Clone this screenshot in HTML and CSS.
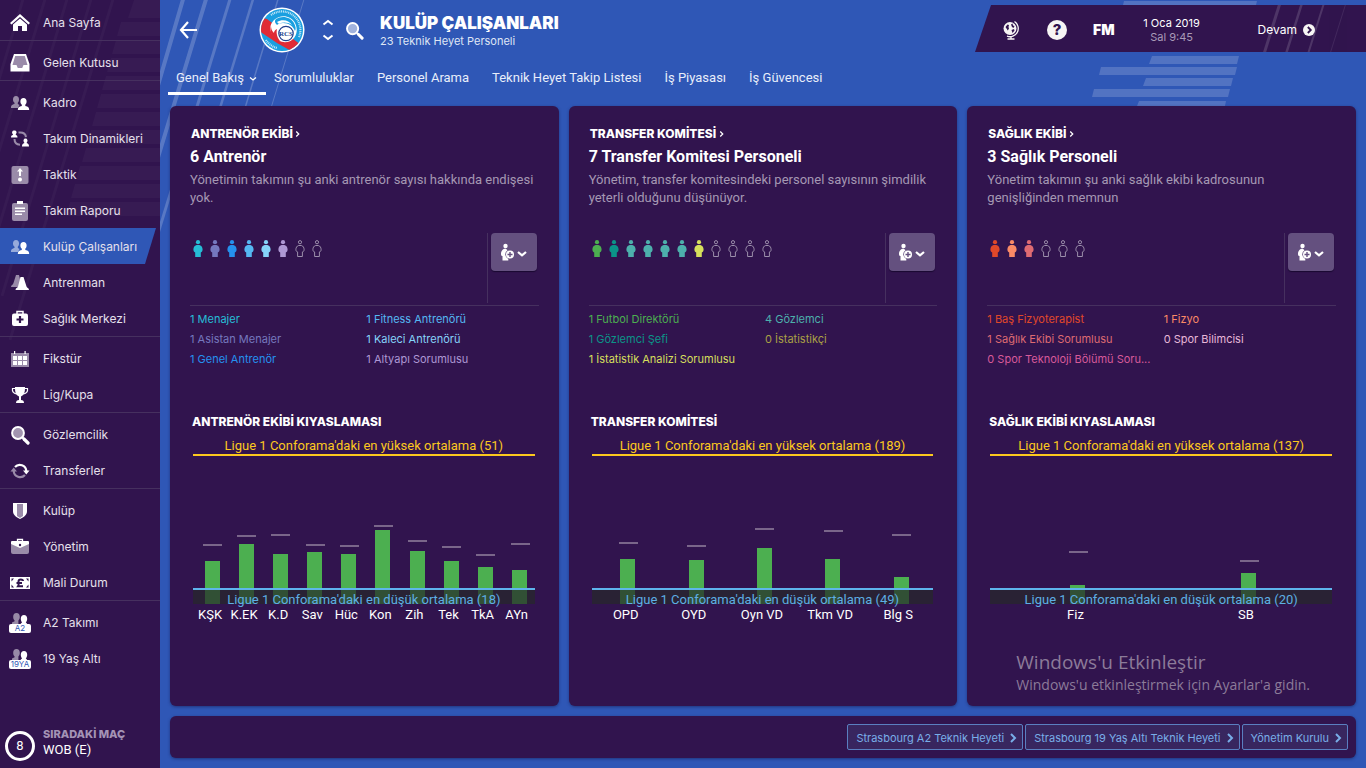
FILE: index.html
```html
<!DOCTYPE html>
<html lang="tr">
<head>
<meta charset="utf-8">
<meta name="viewport" content="width=device-width, initial-scale=1">
<title>Kulüp Çalışanları</title>
<link rel="stylesheet" href="styles.css">
</head>
<body>
<svg class="defs" aria-hidden="true">
  <symbol id="person" viewBox="0 0 10 17"><circle cx="5" cy="2.200" r="2.100"/><path d="M3.600 5h2.800C8.800 5.400 9.600 7.800 9.600 9.600c0 1.600-.7 2.600-1.800 2.800V17H2.200v-4.600C1.100 12.200.4 11.200.4 9.600.4 7.800 1.200 5.400 3.600 5z"/></symbol>
  <symbol id="person-open" viewBox="0 0 10 17"><g fill="none" stroke="#9c8fab" stroke-width="1"><circle cx="5" cy="2.200" r="1.600"/><path d="M3.700 5.500h2.600C8.300 5.900 9.100 7.900 9.100 9.600c0 1.200-.5 2.200-1.700 2.300v4.600H2.600v-4.600C1.400 11.800.9 10.800.9 9.600c0-1.700.8-3.700 2.800-4.100z"/></g></symbol>
  <symbol id="pair" viewBox="0 0 20 20"><path opacity=".5" d="M6 3c2 0 3 1.500 3 3.500 0 1.500-.5 2.500-1.200 3.200v1.300l1.700 1-1.500 3H1c0-2.500.5-3 3.500-4V9.700C3.500 9 3 8 3 6.500 3 4.500 4 3 6 3z"/><path d="M13.500 5c2 0 3.100 1.500 3.100 3.500 0 1.500-.6 2.500-1.300 3.200V13c3 .8 3.900 1.500 3.900 4H7.800c0-2.500 1-3.200 4-4v-1.300c-.8-.7-1.400-1.700-1.400-3.200 0-2 1.100-3.500 3.100-3.500z"/></symbol>
  <symbol id="pair-top" viewBox="0 0 20 20"><path opacity=".5" d="M6.500 0c2.200 0 3.300 1.500 3.300 3.800 0 1.700-.6 2.900-1.400 3.700V12H2V9.500l2.600-1.200v-.8C3.700 6.700 3.200 5.500 3.200 3.800 3.200 1.500 4.300 0 6.500 0z"/><path d="M14 2c2 0 3.200 1.500 3.200 3.700 0 1.600-.6 2.800-1.400 3.500L18 12H9.500l2.600-2.800c-.8-.7-1.300-1.900-1.300-3.500C10.800 3.500 12 2 14 2z"/></symbol>
  <symbol id="chev" viewBox="0 0 8 10"><path d="M2 1l4 4-4 4" fill="none" stroke="currentColor" stroke-width="2"/></symbol>
  <symbol id="addstaff" viewBox="0 0 28 18"><circle cx="5.500" cy="3" r="2.200"/><path d="M5 5.800C2.500 5.800 1 8.500 1 11c0 1.500.5 2 1.500 2v4.500h5.800V16a5 5 0 0 1-.8-8.800C7 6.500 6 5.800 5 5.800z"/><circle cx="10" cy="11.500" r="4"/><path d="M10 9v5M7.500 11.500h5" stroke="#64507f" stroke-width="1.400"/><path d="M18 9l4 3.400L26 9" fill="none" stroke="#fff" stroke-width="2.200"/></symbol>
  <symbol id="lens" viewBox="0 0 20 20"><circle cx="8" cy="8" r="5.900" fill="#fff" fill-opacity=".55" stroke="#fff" stroke-width="2"/><path d="M12.500 12.500l1.500 1.500" stroke="#fff" stroke-width="2"/><path d="M14 14l4 4" stroke="#fff" stroke-width="3.200" stroke-linecap="round"/></symbol>
</svg>

<nav class="side" aria-label="Ana menü">
  <svg class="side-art" viewBox="0 0 160 480" aria-hidden="true">
    <g stroke="#fff" stroke-opacity=".03" stroke-width="3"><path d="M24-4L-40 210M46-4L-40 280M68-4L-20 290M92-4L2 296M114-4L10 340"/></g>
    <g fill="#fff" fill-opacity=".03"><path d="M134 0h26v18h-32zM121 22h39v14h-43zM116 40h44v14h-48zM111 58h49v14h-53zM106 76h54v14h-58zM101 94h59v14h-63zM96 112h64v14H92zM91 130h69v14H87zM86 148h74v14H82zM80 166h80v14H76zM75 184h85v14H71zM70 202h90v14H66z"/></g>
  </svg>
  <ul class="menu">
    <li><a href="#"><svg viewBox="0 0 20 20"><path d="M10 1l10 9-1.500 1.500L10 4l-8.500 7.500L0 10z"/><path d="M10 5.500l7 6V18h-5v-5H8v5H3v-6.500z"/></svg>Ana Sayfa</a></li>
    <li class="sep"><a href="#"><svg viewBox="0 0 20 20"><path d="M4 1h12l3.500 10v7.500H.5V11z"/><path fill="#9a8ba9" d="M5.200 3h9.600l2.700 9h-4l-1.300 3H7.800l-1.300-3h-4z"/></svg>Gelen Kutusu</a></li>
    <li class="sep"><a href="#"><svg viewBox="0 0 20 20"><use href="#pair"/></svg>Kadro</a></li>
    <li><a href="#"><svg viewBox="0 0 20 20"><path d="M4.500 1.500a2 2 0 0 1 1.300 3.600v1c1.200.3 1.700.9 1.700 2.400H1c0-1.500.5-2.100 1.900-2.400v-1A2 2 0 0 1 4.500 1.500zM15.500 9.500a2.100 2.100 0 0 1 1.300 3.700v1.100c1.500.4 2.200 1 2.200 3.200h-7c0-2.200.8-2.800 2.200-3.200v-1.100a2.100 2.100 0 0 1 1.300-3.700z"/><path d="M8.500 3.500c4-.5 7 1 7.500 4.500M4.500 10c0 3.500 2 5.500 5.500 5.800" fill="none" stroke="#9a8ba9" stroke-width="2"/></svg>Takım Dinamikleri</a></li>
    <li><a href="#"><svg viewBox="0 0 20 20"><rect x="1.500" y="1" width="17" height="18" rx="2" fill="#9a8ba9"/><path d="M10 3l3 3.500h-2V11H9V6.500H7z"/><circle cx="10" cy="14.500" r="2"/></svg>Taktik</a></li>
    <li><a href="#"><svg viewBox="0 0 20 20"><rect x="2" y="2" width="16" height="18" rx="2" fill="#9a8ba9"/><path d="M7 0h6v3H7zM5 6.500h10V8H5zM5 9.500h10V11H5zM5 12.500h7V14H5z"/></svg>Takım Raporu</a></li>
    <li><a class="on" href="#" aria-current="page"><svg viewBox="0 0 20 20"><use href="#pair"/></svg>Kulüp Çalışanları</a></li>
    <li><a href="#"><svg viewBox="0 0 20 20"><path fill="#9a8ba9" d="M6 2h3l2 8-3 4H1c0-2 2-2 2.500-4z"/><path d="M10.500 4h3l3 9.500c.5 1.500 2.500 1.500 2.500 3.500H5.500c0-2 2-2 2.500-3.500z"/></svg>Antrenman</a></li>
    <li><a href="#"><svg viewBox="0 0 20 20"><path d="M7 5V2.500h6V5" fill="none" stroke="#fff" stroke-width="1.500"/><rect x="2" y="4.500" width="16" height="12.500" rx="2"/><path d="M10 7v7M6.500 10.500h7" stroke="#31144e" stroke-width="2.200"/></svg>Sağlık Merkezi</a></li>
    <li class="sep"><a href="#"><svg viewBox="0 0 20 20"><path fill="#9a8ba9" d="M1 4h18v14H1z"/><path d="M4 2h1.200v3H4zM14.500 2h1.200v3h-1.200zM3 7h4v4H3zM8 7h4v4H8zM13 7h4v4h-4zM3 12h4v4H3zM8 12h4v4H8zM13 12h4v4h-4z"/></svg>Fikstür</a></li>
    <li><a href="#"><svg viewBox="0 0 20 20"><path d="M5 2h10c0 5-.5 8-4 9.500V15c2 .3 3 1 3 3H6c0-2 1-2.700 3-3v-3.500C5.500 10 5 7 5 2z"/><path d="M5.500 3.500h-3C2 6.500 3.500 8.500 6.500 9M14.500 3.500h3c.5 3-1 5-4 5.500" fill="none" stroke="#fff" stroke-width="1.200"/></svg>Lig/Kupa</a></li>
    <li class="sep"><a href="#"><svg viewBox="0 0 20 20"><use href="#lens"/></svg>Gözlemcilik</a></li>
    <li><a href="#"><svg viewBox="0 0 20 20"><path d="M5 6a6.500 6.500 0 0 1 11.300 4" fill="none" stroke="#fff" stroke-width="2.200"/><path d="M13 9.500h6.500l-3.200 4z"/><path d="M15 14A6.500 6.500 0 0 1 3.700 10" fill="none" stroke="#9a8ba9" stroke-width="2.200"/><path fill="#9a8ba9" d="M.5 10.500H7L3.700 6.500z"/></svg>Transferler</a></li>
    <li class="sep"><a href="#"><svg viewBox="0 0 20 20"><path d="M3 2h14v8c0 4-3 6-7 8-4-2-7-4-7-8z"/><path fill="#9a8ba9" d="M7 3h6v12l-3 2-3-2z"/></svg>Kulüp</a></li>
    <li><a href="#"><svg viewBox="0 0 20 20"><path fill="#9a8ba9" d="M1 6h18v9a2 2 0 0 1-2 2H3a2 2 0 0 1-2-2z"/><path d="M1 5a1 1 0 0 1 1-1h16a1 1 0 0 1 1 1v2l-9 4-9-4z"/><path d="M7.500 4V2.500h5V4" fill="none" stroke="#fff" stroke-width="1.300"/><circle cx="10" cy="8" r="1.200" fill="#31144e"/></svg>Yönetim</a></li>
    <li><a href="#"><svg viewBox="0 0 20 20"><path d="M0 4h20v12H0z"/><path fill="#31144e" d="M1.500 5.500H4l-2.500 3zM18.500 5.500H16l2.500 3zM1.500 14.500H4l-2.500-3zM18.500 14.500H16l2.500-3z"/><path d="M13 8c0-2-4.500-2.500-4.500.5 0 2 .7 3-.5 4.800h5M6.500 10H12" fill="none" stroke="#31144e" stroke-width="2"/></svg>Mali Durum</a></li>
    <li class="sep"><a href="#"><span class="squad"><svg viewBox="0 0 20 20"><use href="#pair-top"/></svg><b>A2</b></span>A2 Takımı</a></li>
    <li><a href="#"><span class="squad"><svg viewBox="0 0 20 20"><use href="#pair-top"/></svg><b>19YA</b></span>19 Yaş Altı</a></li>
  </ul>
  <a class="next" href="#"><span class="ring">8</span><span class="match"><b>SIRADAKİ MAÇ</b><span class="opp">WOB (E)</span></span></a>
</nav>

<main class="main">
  <svg class="main-art" width="1206" height="240" aria-hidden="true">
    <g stroke="#fff" stroke-opacity=".2"><path stroke-width="4" d="M24-4L-8 106M47-4L-27 240"/><path stroke-width="3" d="M71-4L-4 240"/><path stroke-width="2.500" d="M94-4L20 240"/><path stroke-width="1.500" d="M119-4L45 240"/><path stroke-width="1" d="M145-4L71 240"/></g>
  </svg>
  <svg class="bar-art" width="170" height="106" aria-hidden="true"><g fill="#fff" fill-opacity=".17"><path d="M32 1h133l-1 4H31zM60 56h87l-2 8H57zM9 67h136l-2 8H7zM54 78h87l-2 8H51zM2 89h136l-2 8H0zM47 101h87l-1 5H45z"/></g></svg>
  <header class="top">
    <button class="plain back" aria-label="Geri"><svg width="18" height="20" viewBox="0 0 18 20"><path d="M9 2L2 10l7 8M2 10h16" fill="none" stroke="#fff" stroke-width="2.200"/></svg></button>
    <svg class="crest" width="46" height="46" viewBox="0 0 46 46" role="img" aria-label="Strasbourg">
      <defs><clipPath id="disc"><circle cx="23" cy="23" r="21"/></clipPath></defs>
      <circle cx="23" cy="23" r="22.500" fill="#fff"/>
      <g clip-path="url(#disc)"><path fill="#1a9fe0" d="M0 0h46v46H0z"/><path fill="#e02b35" d="M0 10l8 2 34 26-8 7-16-9L0 24z"/></g>
      <g fill="none" stroke="#fff" stroke-width="2.200" stroke-opacity=".75" stroke-dasharray="1 .8"><path d="M12 8A18.500 18.500 0 0 1 40 30"/><path d="M7 33A18.500 18.500 0 0 0 18 41"/></g>
      <path fill="#fff" d="M15 13c6-6 17-5 21 3 3 6 2 12-2 16-5 5-14 4-19-2-5-6-5-12 0-17z"/>
      <path fill="#1a9fe0" d="M17 12c6-4 15-2 18 4 2 4 2 6 1 8-2-5-6-8-12-8-3 0-5 1-6 2-2-2-3-4-1-6z"/>
      <path fill="#fff" d="M18 15c5-3 12-2 15 3-5-3-9-3-13-1z"/>
      <path fill="#e02b35" d="M12 19c-2 7 2 14 10 16-4-4-5-9-4-13-2 1-3 2-3 4-2-2-3-4-3-7z"/>
      <circle cx="27" cy="26.500" r="7.200" fill="#fff" stroke="#203f8c" stroke-width="1.200"/>
      <text x="27" y="29" text-anchor="middle" font-size="7" font-weight="700" fill="#203f8c">RCS</text>
    </svg>
    <div class="steps">
      <button class="plain" aria-label="Önceki"><svg width="12" height="7" viewBox="0 0 12 7"><path d="M1.500 5.500L6 2l4.500 3.500" fill="none" stroke="#fff" stroke-width="2"/></svg></button>
      <button class="plain" aria-label="Sonraki"><svg width="12" height="7" viewBox="0 0 12 7"><path d="M1.500 1.500L6 5l4.500-3.500" fill="none" stroke="#fff" stroke-width="2"/></svg></button>
    </div>
    <button class="plain find" aria-label="Ara"><svg width="19" height="19"><use href="#lens"/></svg></button>
    <div class="heading"><h1>KULÜP ÇALIŞANLARI</h1><p>23 Teknik Heyet Personeli</p></div>
    <div class="status">
      <svg class="status-art" width="90" height="47" aria-hidden="true"><g stroke="#fff" stroke-opacity=".14"><path stroke-width="3" d="M20-2L4 49"/><path stroke-width="2.500" d="M42-2L26 49"/><path stroke-width="2" d="M64-2L48 49"/><path stroke-width="1" opacity=".6" d="M86-2L70 49"/></g></svg>
      <button class="plain globe" aria-label="Dünya"><svg width="18" height="20" viewBox="0 0 18 20"><circle cx="8" cy="8.500" r="6.500" fill="#f7f5f4"/><path fill="#31144e" d="M3.500 7l2-2.500 1.500.5-.5 2 .5 1.500-1.200 2zM9 4.500l1.500-1 .5 2 1.500.5-1 2-1.500-1zM9.500 10l2.500-1 .5 1.500-2 2.500z"/><path d="M12.500 1.500A8.300 8.300 0 0 1 5 16.200M9 16.500v2M5.500 19h7" fill="none" stroke="#f7f5f4" stroke-width="1.300"/></svg></button>
      <button class="plain help" aria-label="Yardım">?</button>
      <button class="plain fm">FM</button>
      <div class="date"><span>1 Oca 2019</span><small>Sal 9:45</small></div>
      <button class="plain go">Devam <svg width="12" height="12" viewBox="0 0 12 12"><circle cx="6" cy="6" r="6" fill="#f7f5f4"/><path d="M4.800 3l3 3-3 3" fill="none" stroke="#31144e" stroke-width="1.800"/></svg></button>
    </div>
  </header>
  <nav class="tabs" aria-label="Sekmeler">
    <a class="on" href="#">Genel Bakış<svg width="8" height="6" viewBox="0 0 8 6"><path d="M1 1.500l3 2.500 3-2.500" fill="none" stroke="#fff" stroke-width="1.300"/></svg></a>
    <a href="#">Sorumluluklar</a><a href="#">Personel Arama</a><a href="#">Teknik Heyet Takip Listesi</a><a href="#">İş Piyasası</a><a href="#">İş Güvencesi</a>
  </nav>

  <div class="cards">
    <section class="card">
      <h2><a href="#">ANTRENÖR EKİBİ <svg width="5" height="8"><use href="#chev"/></svg></a></h2>
      <h3>6 Antrenör</h3>
      <p class="desc">Yönetimin takımın şu anki antrenör sayısı hakkında endişesi yok.</p>
      <div class="staff">
        <div class="people">
          <svg class="c-teal"><use href="#person"/></svg><svg class="c-indigo"><use href="#person"/></svg><svg class="c-blue"><use href="#person"/></svg><svg class="c-sky"><use href="#person"/></svg><svg class="c-pale"><use href="#person"/></svg><svg class="c-lilac"><use href="#person"/></svg><svg><use href="#person-open"/></svg><svg><use href="#person-open"/></svg>
        </div>
        <div class="act"><button class="add" aria-label="Personel ekle"><svg width="28" height="18"><use href="#addstaff"/></svg></button></div>
      </div>
      <div class="roles"><a class="c-teal" href="#">1 Menajer</a><a class="c-sky" href="#">1 Fitness Antrenörü</a><a class="c-indigo" href="#">1 Asistan Menajer</a><a class="c-pale" href="#">1 Kaleci Antrenörü</a><a class="c-blue" href="#">1 Genel Antrenör</a><a class="c-lilac" href="#">1 Altyapı Sorumlusu</a></div>
      <h2 class="cmp">ANTRENÖR EKİBİ KIYASLAMASI</h2>
      <div class="chart">
        <p class="high">Ligue 1 Conforama'daki en yüksek ortalama (51)</p>
        <div class="plot">
          <div style="--v:43px;--m:58px"></div><div style="--v:60px;--m:67px"></div><div style="--v:50px;--m:68px"></div><div style="--v:52px;--m:58px"></div><div style="--v:50px;--m:57px"></div><div style="--v:74px;--m:77px"></div><div style="--v:53px;--m:62px"></div><div style="--v:43px;--m:56px"></div><div style="--v:37px;--m:48px"></div><div style="--v:34px;--m:59px"></div>
          <p class="low">Ligue 1 Conforama'daki en düşük ortalama (18)</p>
        </div>
        <div class="axis"><span>KŞK</span><span>K.EK</span><span>K.D</span><span>Sav</span><span>Hüc</span><span>Kon</span><span>Zih</span><span>Tek</span><span>TkA</span><span>AYn</span></div>
      </div>
    </section>

    <section class="card">
      <h2><a href="#">TRANSFER KOMİTESİ <svg width="5" height="8"><use href="#chev"/></svg></a></h2>
      <h3>7 Transfer Komitesi Personeli</h3>
      <p class="desc">Yönetim, transfer komitesindeki personel sayısının şimdilik yeterli olduğunu düşünüyor.</p>
      <div class="staff">
        <div class="people">
          <svg class="c-green"><use href="#person"/></svg><svg class="c-deep"><use href="#person"/></svg><svg class="c-sea"><use href="#person"/></svg><svg class="c-sea"><use href="#person"/></svg><svg class="c-sea"><use href="#person"/></svg><svg class="c-sea"><use href="#person"/></svg><svg class="c-lime"><use href="#person"/></svg><svg><use href="#person-open"/></svg><svg><use href="#person-open"/></svg><svg><use href="#person-open"/></svg><svg><use href="#person-open"/></svg>
        </div>
        <div class="act"><button class="add" aria-label="Personel ekle"><svg width="28" height="18"><use href="#addstaff"/></svg></button></div>
      </div>
      <div class="roles"><a class="c-green" href="#">1 Futbol Direktörü</a><a class="c-sea" href="#">4 Gözlemci</a><a class="c-deep" href="#">1 Gözlemci Şefi</a><a class="c-olive" href="#">0 İstatistikçi</a><a class="c-lime" href="#">1 İstatistik Analizi Sorumlusu</a></div>
      <h2 class="cmp">TRANSFER KOMİTESİ</h2>
      <div class="chart">
        <p class="high">Ligue 1 Conforama'daki en yüksek ortalama (189)</p>
        <div class="plot">
          <div style="--v:45px;--m:60px"></div><div style="--v:44px;--m:57px"></div><div style="--v:56px;--m:74px"></div><div style="--v:45px;--m:72px"></div><div style="--v:27px;--m:68px"></div>
          <p class="low">Ligue 1 Conforama'daki en düşük ortalama (49)</p>
        </div>
        <div class="axis"><span>OPD</span><span>OYD</span><span>Oyn VD</span><span>Tkm VD</span><span>Blg S</span></div>
      </div>
    </section>

    <section class="card">
      <h2><a href="#">SAĞLIK EKİBİ <svg width="5" height="8"><use href="#chev"/></svg></a></h2>
      <h3>3 Sağlık Personeli</h3>
      <p class="desc">Yönetim takımın şu anki sağlık ekibi kadrosunun genişliğinden memnun</p>
      <div class="staff">
        <div class="people">
          <svg class="c-red"><use href="#person"/></svg><svg class="c-orange"><use href="#person"/></svg><svg class="c-rose"><use href="#person"/></svg><svg><use href="#person-open"/></svg><svg><use href="#person-open"/></svg><svg><use href="#person-open"/></svg>
        </div>
        <div class="act"><button class="add" aria-label="Personel ekle"><svg width="28" height="18"><use href="#addstaff"/></svg></button></div>
      </div>
      <div class="roles"><a class="c-red" href="#">1 Baş Fizyoterapist</a><a class="c-orange" href="#">1 Fizyo</a><a class="c-rose" href="#">1 Sağlık Ekibi Sorumlusu</a><a class="c-pink" href="#">0 Spor Bilimcisi</a><a class="c-magenta" href="#">0 Spor Teknoloji Bölümü Soru...</a></div>
      <h2 class="cmp">SAĞLIK EKİBİ KIYASLAMASI</h2>
      <div class="chart">
        <p class="high">Ligue 1 Conforama'daki en yüksek ortalama (137)</p>
        <div class="plot">
          <div style="--v:19px;--m:51px"></div><div style="--v:31px;--m:42px"></div>
          <p class="low">Ligue 1 Conforama'daki en düşük ortalama (20)</p>
        </div>
        <div class="axis"><span>Fiz</span><span>SB</span></div>
      </div>
    </section>
  </div>

  <footer class="links">
    <a href="#">Strasbourg A2 Teknik Heyeti <svg width="8" height="10"><use href="#chev"/></svg></a>
    <a href="#">Strasbourg 19 Yaş Altı Teknik Heyeti <svg width="8" height="10"><use href="#chev"/></svg></a>
    <a href="#">Yönetim Kurulu <svg width="8" height="10"><use href="#chev"/></svg></a>
  </footer>
</main>
<div class="activate"><strong>Windows'u Etkinleştir</strong><span>Windows'u etkinleştirmek için Ayarlar'a gidin.</span></div>
</body>
</html>
```
FILE: styles.css
```css
* { box-sizing: border-box; margin: 0; padding: 0; }

:root {
  --dark: #31144e;
  --blue: #2f57b6;
  --line: #46305f;
}

body {
  position: relative;
  display: flex;
  min-height: 100vh;
  background: var(--blue);
  color: #fff;
  font: 13px/18px Roboto, "Liberation Sans", sans-serif;
}

a { color: inherit; text-decoration: none; }
ul { list-style: none; }
svg { flex: none; }
.defs { position: absolute; width: 0; height: 0; }
.plain { background: none; border: 0; color: inherit; font: inherit; cursor: pointer; display: flex; align-items: center; }

/* Sidebar */
.side {
  position: relative;
  flex: 0 0 160px;
  display: flex;
  flex-direction: column;
  justify-content: space-between;
  padding-top: 4px;
  background: var(--dark);
}
.side-art { position: absolute; left: 0; top: 0; width: 160px; }
.menu { position: relative; }
.menu .sep { border-top: 1px solid var(--line); padding-top: 3px; }
.menu a {
  display: flex;
  align-items: center;
  gap: 13px;
  height: 36px;
  padding: 2px 0 0 10px;
  font: 12px/18px Inter, sans-serif;
  color: #e6e0ec;
}
.menu a.on {
  background: var(--blue);
  margin-right: 4px;
  clip-path: polygon(0 0, 100% 0, calc(100% - 11px) 100%, 0 100%);
}
.menu svg { display: block; width: 20px; height: 20px; fill: #fff; }
.squad { position: relative; width: 20px; height: 20px; }
.squad b {
  position: absolute;
  left: -1px;
  right: -1px;
  bottom: 0;
  border-radius: 2px;
  background: #fff;
  color: #2f57b6;
  font: 8px/9px Inter, sans-serif;
  text-align: center;
}
.next { position: relative; display: flex; align-items: center; gap: 8px; padding: 0 5px 4px; }
.ring {
  width: 30px;
  height: 30px;
  border: 3px solid #fff;
  border-radius: 50%;
  text-align: center;
  line-height: 24px;
}
.match { padding-bottom: 6px; }
.match b { display: block; font: 800 11px/15px Inter, sans-serif; color: #a493b5; }
.opp { display: block; line-height: 16px; }

/* Header */
.main { position: relative; flex: 1; min-width: 0; display: flex; flex-direction: column; padding: 0 10px 10px; overflow: hidden; }
.main-art { position: absolute; left: 0; top: 0; }
.bar-art { position: absolute; right: 104px; top: 0; }
.top { position: relative; display: flex; align-items: center; height: 60px; padding-left: 9px; }
.crest { margin-left: 62px; font-family: "Liberation Serif", serif; }
.steps { display: flex; flex-direction: column; gap: 8px; margin-left: 17px; }
.find { margin-left: 11px; }
.heading { margin-left: 16px; padding-top: 1px; }
h1 { font: 900 17px/20px Inter, sans-serif; }
.heading p { font: 11px/16px Inter, sans-serif; color: #dfe6f5; }
.status {
  position: relative;
  align-self: flex-start;
  display: flex;
  align-items: center;
  width: 391px;
  height: 47px;
  margin: 5px -10px 0 auto;
  padding: 2px 0 0 27px;
  background: var(--dark);
  clip-path: polygon(16px 0, 100% 0, 100% 100%, 0 100%);
}
.status-art { position: absolute; right: 16px; top: 0; }
.help {
  justify-content: center;
  width: 20px;
  height: 20px;
  margin-left: 27px;
  border-radius: 50%;
  background: #f7f5f4;
  color: var(--dark);
  font: 800 15px/20px Inter, sans-serif;
}
.fm { margin-left: 26px; font: 900 14px/20px Inter, sans-serif; }
.date { display: flex; flex-direction: column; align-items: center; width: 58px; margin-left: 28px; font: 11px/14px Inter, sans-serif; white-space: nowrap; }
.date small { font-size: 11px; color: #a99bb8; }
.go { position: relative; gap: 6px; margin-left: 57px; font: 12px/18px Inter, sans-serif; }

.tabs { position: relative; display: flex; gap: 7px; margin: 0 0 11px -2px; }
.tabs a { padding: 9px 8px 5px; border-bottom: 3px solid transparent; font-size: 13px; line-height: 18px; color: #e8eefa; }
.tabs a.on { border-color: #fff; margin-right: -7px; }
.tabs svg { margin: 0 1px 0 5px; }

/* Cards */
.cards { position: relative; flex: 1; display: grid; grid-template-columns: repeat(3, minmax(0, 1fr)); gap: 10px; }
.card, .links { background: var(--dark); border-radius: 6px; box-shadow: 0 1px 3px rgba(20, 20, 70, .5); }
.card { padding: 20px 20px 20px; }
h2 { font: 800 12px/16px Inter, sans-serif; margin: 0 0 4px 1px; }
h3 { font: 700 16px/22px Roboto, sans-serif; }
.desc { margin-top: 3px; min-height: 36px; color: #a598b3; }
.staff { display: flex; justify-content: space-between; height: 70px; margin-top: 26px; }
.people { display: flex; gap: 7px; padding: 7px 0 0 3px; }
.people svg { width: 10px; height: 17px; fill: currentColor; }
.act { border-left: 1px solid var(--line); padding: 0 2px 0 3px; }
.add {
  display: flex;
  align-items: center;
  justify-content: center;
  width: 46px;
  height: 38px;
  border: 0;
  border-radius: 4px;
  background: #64507f;
  fill: #fff;
  box-shadow: 0 1px 1px rgba(10, 0, 30, .6);
}
.roles {
  display: grid;
  grid-template-columns: repeat(2, minmax(0, 1fr));
  align-content: start;
  column-gap: 4px;
  height: 66px;
  margin-top: 2px;
  padding-top: 3px;
  border-top: 1px solid var(--line);
  font: 11px/20px Inter, sans-serif;
  white-space: nowrap;
}
.cmp { margin: 43px 0 6px 2px; }

.c-teal { color: #26bdd6; }
.c-indigo { color: #7578be; }
.c-blue { color: #2591ee; }
.c-sky { color: #55b8f2; }
.c-pale { color: #86d3f9; }
.c-lilac { color: #ae98d4; }
.c-green { color: #4caf50; }
.c-deep { color: #0b9488; }
.c-sea { color: #4db0ac; }
.c-lime { color: #d6df5c; }
.c-olive { color: #aaa045; }
.c-red { color: #e0482a; }
.c-orange { color: #fb8a66; }
.c-rose { color: #df6b72; }
.c-pink { color: #e8b8d8; }
.c-magenta { color: #d85a9a; }

/* Comparison charts */
.chart { margin: 0 4px 0 3px; text-align: center; }
.high { padding-top: 2px; border-bottom: 2px solid #fcc81e; color: #fcc81e; line-height: 16px; }
.plot { position: relative; display: grid; grid-auto-flow: column; grid-auto-columns: minmax(0, 1fr); height: 148px; }
.plot > div { position: relative; display: flex; align-items: flex-end; justify-content: center; padding-left: 4px; }
.plot > div::before { content: ""; width: 15px; height: var(--v); background: #4caf50; }
.plot > div::after {
  content: "";
  position: absolute;
  left: calc(50% - 7px);
  bottom: var(--m);
  width: 19px;
  height: 2px;
  background: #7a668a;
}
.low {
  position: absolute;
  inset: auto 0 0;
  height: 16px;
  padding-top: 1px;
  border-top: 2px solid #5eb5ec;
  background: rgba(38, 40, 42, .7);
  color: #5eaee4;
}
.axis { display: grid; grid-auto-flow: column; grid-auto-columns: minmax(0, 1fr); padding-right: 1px; line-height: 22px; white-space: nowrap; }

/* Footer links */
.links { position: relative; display: flex; justify-content: flex-end; gap: 2px; margin-top: 10px; padding: 8px; }
.links a {
  display: flex;
  align-items: center;
  gap: 5px;
  height: 26px;
  padding: 2px 5px 0 8px;
  border: 1px solid #5a7fc0;
  border-radius: 2px;
  background: #38265f;
  color: #78aee8;
  font: 11px/18px Inter, sans-serif;
}

.activate {
  position: absolute;
  right: 56px;
  bottom: 72px;
  color: #8c7b99;
  font-family: "Open Sans", sans-serif;
  pointer-events: none;
}
.activate strong { display: block; font-size: 19px; font-weight: 400; line-height: 24px; }
.activate span { display: block; font-size: 14px; line-height: 22px; }
```
